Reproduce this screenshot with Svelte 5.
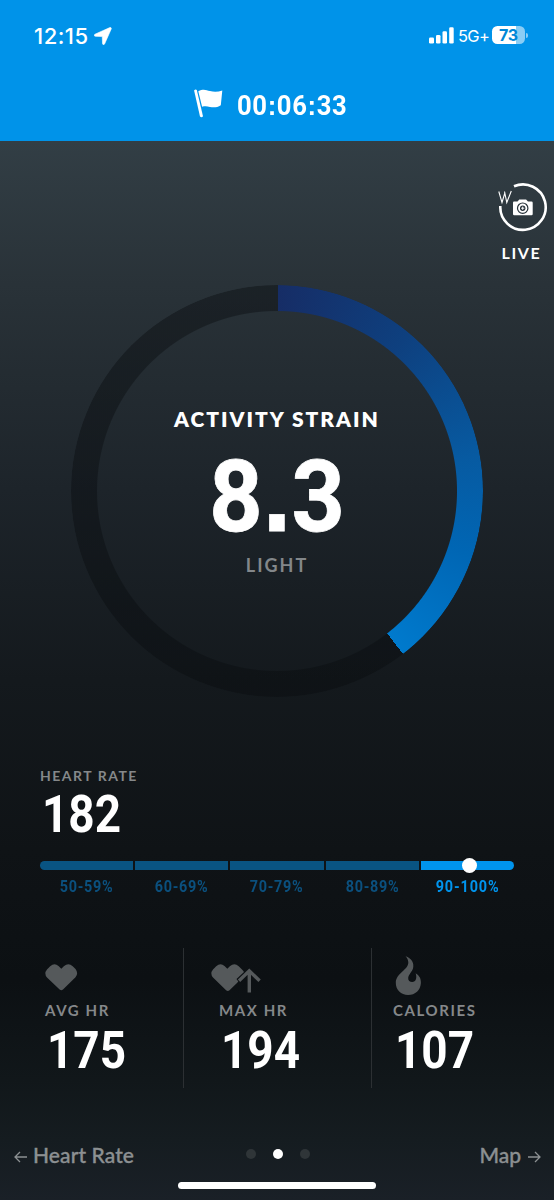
<script>
  const strain = 8.3;
  const maxStrain = 21;
  const sweep = (strain / maxStrain) * 360;
  const [whole, tenth] = strain.toFixed(1).split('.');
  const zones = ['50-59%', '60-69%', '70-79%', '80-89%', '90-100%'];
  const activeZone = 4;
</script>

<div class="screen">
  <header>
    <div class="status">
      <div class="clock">
        <span class="time">12:15</span>
        <svg width="18" height="18" viewBox="0 0 18 18"><path d="M15.800.6 1 7.200c-1.200.6-1 2 .3 2.100l7 .3.2 7c.1 1.300 1.600 1.400 2.100.3L17.200 2C17.600.9 16.800.200 15.800.6Z" fill="#fff" stroke="#fff" stroke-width=".6" /></svg>
      </div>
      <div class="signals">
        <svg width="25" height="17" viewBox="0 0 25 17" fill="#fff">
          <rect x="0" y="10.500" width="5" height="6" rx="1.300" />
          <rect x="7" y="8" width="4.500" height="8.500" rx="1.300" />
          <rect x="13.500" y="4.300" width="4.500" height="12.200" rx="1.300" />
          <rect x="20.200" y="0.300" width="4.500" height="16.200" rx="1.300" />
        </svg>
        <span class="network">5G+</span>
        <div class="battery"><span>73</span></div>
        <i class="nub"></i>
      </div>
    </div>
    <div class="timer">
      <svg width="29" height="29" viewBox="0 0 29 29" fill="#fff">
        <path d="M.1 1.400Q1.500-.1 2.800 1L9 27.200Q7.700 29 6 27.600Z" />
        <path d="M4.300 2.200C9.500-.5 12 1 16 2c4.300 1 8.200.8 12.300-.6L26.800 16.200c-3.500 2.200-7 2.600-10.800 1.700-3-.7-5.200-.9-7.900-.1Z" />
      </svg>
      <span class="timer-text">00<b>:</b>06<b>:</b>33</span>
    </div>
  </header>

  <main>
    <div class="live">
      <svg width="50" height="50" viewBox="0 0 50 50" fill="none">
        <path d="M16 3.300A22.700 22.700 0 1 1 2.300 23" stroke="#fff" stroke-width="2.600" />
        <path d="M.8 8.500 4 19.500 7 9.500M6.500 8.500l2.300 11 4.500-11.500" stroke="#fff" stroke-width="1.100" />
        <path d="M16 18.500h3.500l1.800-2h6.800l1.800 2h3.600q1.200 0 1.200 1.200v11.300q0 1.300-1.200 1.300H16.200q-1.200 0-1.200-1.300v-11.300q0-1.200 1-1.200Z" fill="#fff" />
        <circle cx="24.700" cy="25.200" r="5.200" stroke="#27323a" stroke-width="1.200" />
        <circle cx="24.700" cy="25.200" r="2.700" fill="#27323a" />
        <path d="M24.700 23.600v3.200M23.100 25.200h3.200" stroke="#fff" stroke-width="1" />
      </svg>
      <span>LIVE</span>
    </div>

    <section class="ring">
      <div class="track" style="--sweep: {sweep}deg"></div>
      <div class="ring-content">
        <div class="ring-title">ACTIVITY STRAIN</div>
        <div class="score">{whole}<b>.</b>{tenth}</div>
        <div class="level">LIGHT</div>
      </div>
    </section>

    <section class="rate">
      <div class="label">HEART RATE</div>
      <div class="number">182</div>
      <div class="zones">
        {#each zones as zone, i}
          <div class="zone" class:active={i === activeZone}>
            <div class="bar">{#if i === activeZone}<i></i>{/if}</div>
            <span>{zone}</span>
          </div>
        {/each}
      </div>
    </section>

    <section class="stats">
      <div class="stat avg">
        <svg width="36" height="40" viewBox="0 -2.500 36 40" fill="#55595b"><path d="M2 11 5.200 7.700Q9.500 4 13.500 7.500L16.300 10.300l2.800-2.800Q23.500 4 27.700 7.700L30.500 10.500q3.300 4.500 0 8.200L18 31q-1.700 1.500-3.400 0L2 19Q-1.300 15 2 11Z" /></svg>
        <div class="label">AVG HR</div>
        <div class="number">175</div>
      </div>
      <div class="stat max">
        <svg width="52" height="40" viewBox="0 -2.500 52 40">
          <path fill="#55595b" d="M2 11 5.200 7.700Q9.500 4 13.500 7.500L16.300 10.300l2.800-2.800Q23.500 4 27.700 7.700L31.500 11.500 33 13.500l-7.500 7 1.800 2.600L26 24.500l-7.500 7.300q-1.700 1.500-3.400 0L2 19Q-1.300 15 2 11Z" />
          <path fill="none" stroke="#55595b" stroke-width="3.400" d="M38.300 34V12.500M28 22.300l10.300-10 10.300 10" />
        </svg>
        <div class="label">MAX HR</div>
        <div class="number">194</div>
      </div>
      <div class="stat cal">
        <svg width="30" height="40" viewBox="0 0 30 40" fill="#55595b"><path d="M10.500.2C16.500 2 19.500 7 18 12.500 16.900 16 13.500 18.500 13.200 22c-.2 2.600 1.600 4 4 4 3.800 0 5-4.500 3.400-8.800 4.100 2.400 5.500 5.900 5.300 9.800-.4 7.200-5.600 12-12.800 12C6 39 .7 34 .8 26.800.9 17 13.500 14 13.300 6.200 13.200 3.800 12.200 1.700 10.500.2Z" /></svg>
        <div class="label">CALORIES</div>
        <div class="number">107</div>
      </div>
    </section>
  </main>

  <footer>
    <div class="nav">
      <div class="link">
        <svg width="13" height="12" viewBox="0 0 13 12"><path d="M13 6H1M6 1 1 6l5 5" /></svg>
        <span class="prev">Heart Rate</span>
      </div>
      <div class="dots"><i></i><i class="on"></i><i></i></div>
      <div class="link end">
        <span class="next">Map</span>
        <svg width="13" height="12" viewBox="0 0 13 12"><path d="M0 6h12M7 1l5 5-5 5" /></svg>
      </div>
    </div>
    <div class="home"></div>
  </footer>
</div>

<style>
  :global(body) { margin: 0; background: #0e1216; }
  * { box-sizing: border-box; }
  svg { display: block; flex: none; }
  .screen {
    width: 554px; height: 1200px; overflow: hidden; color: #fff;
    display: flex; flex-direction: column;
    font-family: Lato, "Open Sans", sans-serif; white-space: nowrap;
    background: linear-gradient(#323e45 141px, #293238 285px, #1d242a 490px, #14191d 680px, #0f1316 850px, #0c1013 980px, #11171a 1080px, #151c20 1140px, #1a2027 1200px);
  }
  header { height: 141px; background: #0093e9; flex: none; }
  .status { height: 72px; padding: 0 26px 0 34px; display: flex; justify-content: space-between; }
  .clock { display: flex; padding-top: 23px; }
  .clock svg { margin: 4px 0 0 5px; }
  .time { font: 500 22px/26px Inter, sans-serif; width: 55px; letter-spacing: .5px; }
  .signals { display: flex; padding-top: 26px; }
  .signals > svg { margin-top: 1px; }
  .network { width: 34px; margin-left: 4px; font: 400 16.500px/21px Inter, sans-serif; letter-spacing: -.7px; }
  .battery {
    width: 33px; height: 18px; border-radius: 5.500px; text-align: center; color: #0087d7;
    background: linear-gradient(90deg, #fff 73%, #8acdf5 73%); font: 700 16px/19px Inter, sans-serif; letter-spacing: -.3px;
  }
  .nub { width: 2px; height: 5px; margin: 7px 0 0 1px; border-radius: 0 2px 2px 0; background: #8acdf5; }
  .timer { display: flex; padding: 17px 0 0 194px; }
  .timer-text { margin-left: 14px; font: 700 28px/34px Roboto, sans-serif; transform: scaleX(.915); transform-origin: left; letter-spacing: .7px; }
  .timer-text b { font-family: "Liberation Sans", sans-serif; }
  main { flex: 1; display: flex; flex-direction: column; }
  .live { align-self: flex-end; width: 50px; margin: 42px 6px 0 0; text-align: center; height: 102px; }
  .live span { display: block; margin: 10px 3px 0 0; font-size: 16px; line-height: 20px; font-weight: 700; letter-spacing: 1.600px; }
  .ring { width: 412px; height: 412px; margin-left: 71px; display: grid; flex: none; }
  .ring > * { grid-area: 1 / 1; }
  .track {
    border-radius: 50%;
    background: conic-gradient(rgba(9, 12, 15, .42) .4deg, #162d66 .4deg, #0e407f 40deg, #075aa1 80deg, #0066b4 108deg, #007acd var(--sweep), rgba(9, 12, 15, .42) var(--sweep));
    -webkit-mask: radial-gradient(circle, transparent 179.500px, #000 180.500px);
    mask: radial-gradient(circle, transparent 179.500px, #000 180.500px);
  }
  .ring-content { padding-top: 120px; text-align: center; }
  .ring-title { font-size: 21px; line-height: 28px; font-weight: 800; letter-spacing: 2px; }
  .score { margin-top: 6px; margin-bottom: -1px; font: 700 100px/116px Roboto, sans-serif; transform: scaleX(.93); -webkit-text-stroke: .8px #fff; }
  .score b { font: 700 112px/100px "Liberation Sans", sans-serif; }
  .level { font-size: 18px; line-height: 22px; font-weight: 700; letter-spacing: 2px; color: #83878a; }
  .label { font-size: 14px; line-height: 18px; font-weight: 700; letter-spacing: 1.500px; color: #85888a; }
  .number { margin-left: 2px; font: 700 51px/58px Roboto, sans-serif; transform: scaleX(.9); transform-origin: left; }
  .rate { margin: 70px 40px 0; height: 130px; }
  .rate .number { margin-top: 1px; }
  .zones { display: flex; gap: 2px; margin-top: 17px; }
  .zone { flex: 1; text-align: center; color: #0b507e; font: 700 16px/20px Roboto, sans-serif; }
  .zone span { display: block; margin-top: 7px; transform: scaleX(.9); letter-spacing: .8px; }
  .active span { letter-spacing: 1px; }
  .bar { height: 9px; background: #095482; display: flex; align-items: center; justify-content: center; }
  .zone:first-child .bar { border-radius: 5px 0 0 5px; }
  .zone:last-child .bar { border-radius: 0 5px 5px 0; }
  .active .bar { background: #0094ed; }
  .active { color: #0094ed; }
  .bar i { width: 15px; height: 15px; flex: none; border-radius: 50%; background: #fff; margin-left: 5px; }
  .stats { display: grid; grid-template-columns: 184px 188px 1fr; height: 140px; margin-top: 51px; }
  .stat { border-right: 1px solid #2c3033; padding-top: 8px; }
  .stat:last-child { border: 0; }
  .avg { padding-left: 45px; }
  .max { padding-left: 35px; }
  .cal { padding-left: 21px; }
  .stat .label { margin-top: 5px; font-size: 15px; letter-spacing: 1.600px; }
  .stat .number { margin-top: 3px; }
  .max svg { margin-left: -8px; }
  .cal svg { margin-left: 2px; }
  footer { height: 66px; flex: none; }
  .nav { display: grid; grid-template-columns: 1fr 64px 1fr; padding: 8px 13px 0 14px; }
  .link { display: flex; color: #8c9092; font-size: 21px; line-height: 26px; font-weight: 500; -webkit-text-stroke: .35px #8c9092; }
  .link svg { fill: none; stroke: #8c9092; stroke-width: 1.300; margin-top: 9px; }
  .prev { margin-left: 6px; letter-spacing: .1px; }
  .next { margin-right: 7px; }
  .end { justify-content: flex-end; }
  .dots { display: flex; justify-content: space-between; padding-top: 7px; }
  .dots i { width: 10px; height: 10px; border-radius: 50%; background: #2f3538; }
  .dots .on { background: #fff; }
  .home { width: 198px; height: 7px; border-radius: 4px; background: #fff; margin: 14px auto 0 178px; }
</style>
